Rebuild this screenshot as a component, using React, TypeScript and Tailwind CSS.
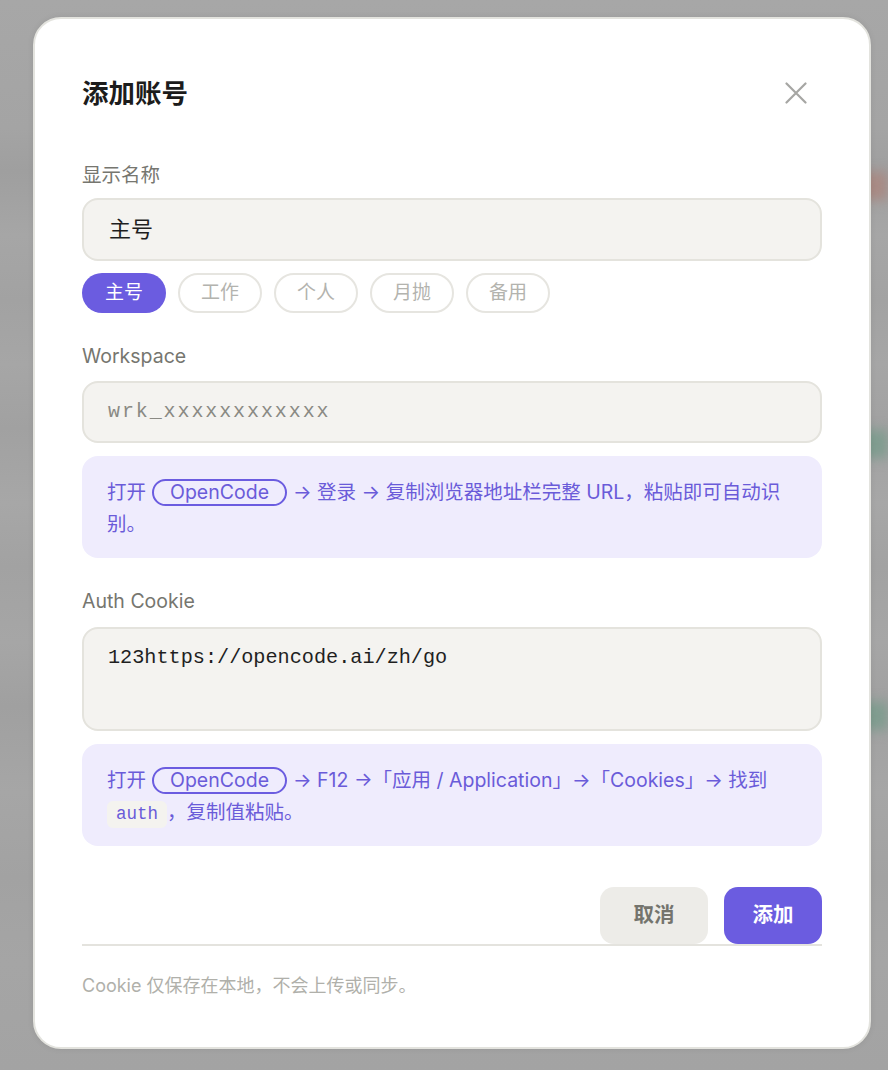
import React from "react";

const sans = { fontFamily: '"Inter", "Noto Sans CJK SC", sans-serif' };

function Pill() {
  return (
    <span className="inline-flex h-[27px] items-center rounded-full border-2 border-[#6b5ce0] px-[16px] mx-[6px] align-middle leading-none text-[19.5px] relative -top-[1px]">
      OpenCode
    </span>
  );
}

export default function App() {
  const chips = ["主号", "工作", "个人", "月抛", "备用"];
  return (
    <div
      className="relative h-[1070px] w-[888px] overflow-hidden bg-[linear-gradient(180deg,#a7a7a7_0%,#a4a4a4_12%,#9f9f9f_16%,#a6a6a6_22%,#a2a2a2_28%,#a6a6a6_34%,#a1a1a1_40%,#a7a7a7_47%,#a2a2a2_53%,#a6a6a6_60%,#a0a0a0_66%,#a6a6a6_74%,#a2a2a2_82%,#a5a5a5_90%,#a3a3a3_100%)] pl-[33px] pt-[17px]"
      style={sans}
    >
      <div className="absolute right-0 top-[172px] h-[28px] w-[30px] bg-[#a88a84] blur-[6px]" />
      <div className="absolute right-0 top-[430px] h-[28px] w-[30px] bg-[#7f9c8f] blur-[6px]" />
      <div className="absolute right-0 top-[702px] h-[28px] w-[30px] bg-[#7f9c8f] blur-[6px]" />

      <div className="relative w-[838px] rounded-[28px] border-2 border-[#e3e3de] bg-white px-[47px] pb-[48px] pt-[56px] shadow-[0_0_6px_rgba(0,0,0,0.08)]">
        <div className="flex h-[36px] items-center justify-between">
          <h1 className="text-[26.5px] font-bold leading-[36px] text-[#1c1c1c]">添加账号</h1>
          <svg width="22" height="22" viewBox="0 0 22 22" className="mr-[15px]">
            <path d="M1.5 1.5 L20.5 20.5 M20.5 1.5 L1.5 20.5" stroke="#a6a6a3" strokeWidth="2.2" strokeLinecap="round" />
          </svg>
        </div>

        <div className="mt-[50px] text-[19.5px] leading-[28px] text-[#76766f]">显示名称</div>
        <div className="mt-[9px] flex h-[63px] items-center rounded-[16px] border-2 border-[#e4e3dd] bg-[#f4f3f0] pl-[25px] text-[22px] text-[#1f1f1f]">
          主号
        </div>
        <div className="mt-[12px] flex gap-[12px]">
          {chips.map((c, i) => (
            <div
              key={c}
              className={
                i === 0
                  ? "flex h-[40px] w-[84px] items-center justify-center rounded-full bg-[#6b5ce0] text-[19px] text-white"
                  : "flex h-[40px] w-[84px] items-center justify-center rounded-full border-2 border-[#e6e5e0] text-[19px] text-[#b3b3ae]"
              }
            >
              {c}
            </div>
          ))}
        </div>

        <div className="mt-[29px] text-[19.5px] leading-[28px] text-[#76766f]">Workspace</div>
        <div
          className="mt-[11px] flex h-[62px] items-center rounded-[16px] border-2 border-[#e4e3dd] bg-[#f4f3f0] pl-[24px] text-[20px] tracking-[1.9px] text-[#8a8a84]"
          style={{ fontFamily: '"Liberation Mono", monospace' }}
        >
          wrk_xxxxxxxxxxxx
        </div>
        <div className="mt-[13px] rounded-[16px] bg-[#efecfd] px-[25px] pb-[18px] pt-[20px] text-[19.5px] leading-[32px] text-[#6a5bd9]">
          打开<Pill />→ 登录 → 复制浏览器地址栏完整 URL，粘贴即可自动识别。
        </div>

        <div className="mt-[29px] text-[19.5px] leading-[28px] text-[#76766f]">Auth Cookie</div>
        <div
          className="mt-[12px] h-[104px] rounded-[16px] border-2 border-[#e4e3dd] bg-[#f4f3f0] pl-[24px] pt-[14px] text-[20.2px] leading-[30px] text-[#1f1f1f]"
          style={{ fontFamily: '"Liberation Mono", monospace' }}
        >
          123https://opencode.ai/zh/go
        </div>
        <div className="mt-[13px] rounded-[16px] bg-[#efecfd] px-[25px] pb-[18px] pt-[20px] text-[19.5px] leading-[32px] text-[#6a5bd9]">
          打开<Pill />→ F12 →「应用 / Application」→「Cookies」→ 找到{" "}
          <span
            className="inline-block rounded-[6px] bg-[#f4f3ef] px-[9px] text-[17.5px] leading-[27px]"
            style={{ fontFamily: '"Liberation Mono", monospace' }}
          >
            auth
          </span>
          ，复制值粘贴。
        </div>

        <div className="mt-[41px] flex justify-end gap-[16px] border-b-2 border-[#e4e3de]">
          <button className="h-[57px] w-[108px] rounded-[14px] bg-[#edece8] text-[20.5px] font-semibold text-[#74746d]">
            取消
          </button>
          <button className="h-[57px] w-[98px] rounded-[14px] bg-[#6b5ce0] text-[20.5px] font-semibold text-white">
            添加
          </button>
        </div>
        <div className="mt-[27px] text-[18px] leading-[26px] text-[#b0b0aa]">Cookie 仅保存在本地，不会上传或同步。</div>
      </div>
    </div>
  );
}
